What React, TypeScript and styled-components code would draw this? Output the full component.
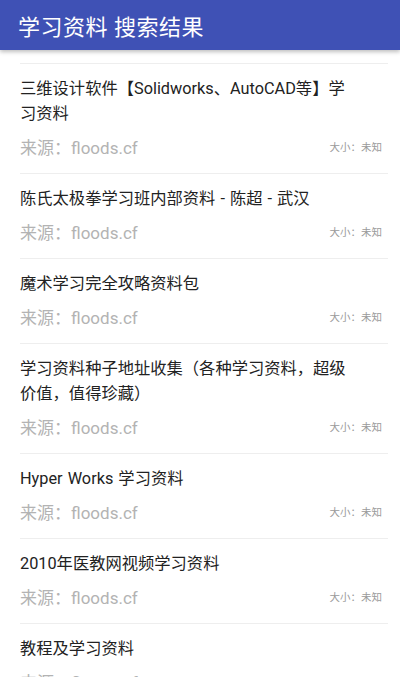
import styled, { createGlobalStyle } from 'styled-components'

const GlobalStyle = createGlobalStyle`
  html, body {
    margin: 0;
    padding: 0;
    background: #fff;
    font-family: Roboto, "Noto Sans CJK SC", sans-serif;
  }
`

const Page = styled.div`
  width: 400px;
  height: 677px;
  overflow: hidden;
  background: #fff;
`

const Toolbar = styled.header`
  height: 50px;
  background-color: #3f51b5;
  color: #fff;
  display: flex;
  align-items: center;
  padding-left: 18px;
  box-shadow: 0 2px 4px rgba(0, 0, 0, 0.25);
  position: relative;
  z-index: 1;

  h1 {
    margin: 0;
    font-size: 22px;
    font-weight: 400;
    letter-spacing: 0.5px;
  }
`

const List = styled.ul`
  list-style: none;
  margin: 13px 12px 0 20px;
  padding: 0;
  border-top: 1px solid #eeeeee;
`

const Item = styled.li`
  padding: 12px 0 14px;
  border-bottom: 1px solid #eeeeee;
`

const Title = styled.div`
  font-size: 16.3px;
  line-height: 25px;
  color: #222;
  max-width: 340px;
  word-spacing: 1px;
`

const Meta = styled.div`
  display: flex;
  align-items: center;
  justify-content: space-between;
  margin-top: 8px;
  height: 25px;
`

const Source = styled.span`
  font-size: 17px;
  color: #b3b3b3;
`

const Size = styled.span`
  font-size: 10.5px;
  color: #9a9a9a;
  margin-right: 6px;
`

const results = [
  '三维设计软件【Solidworks、AutoCAD等】学习资料',
  '陈氏太极拳学习班内部资料 - 陈超 - 武汉',
  '魔术学习完全攻略资料包',
  '学习资料种子地址收集（各种学习资料，超级价值，值得珍藏）',
  'Hyper Works 学习资料',
  '2010年医教网视频学习资料',
  '教程及学习资料',
]

export default function App() {
  return (
    <Page>
      <GlobalStyle />
      <Toolbar>
        <h1>学习资料 搜索结果</h1>
      </Toolbar>
      <List>
        {results.map((title) => (
          <Item key={title}>
            <Title>{title}</Title>
            <Meta>
              <Source>来源：floods.cf</Source>
              <Size>大小：未知</Size>
            </Meta>
          </Item>
        ))}
      </List>
    </Page>
  )
}
